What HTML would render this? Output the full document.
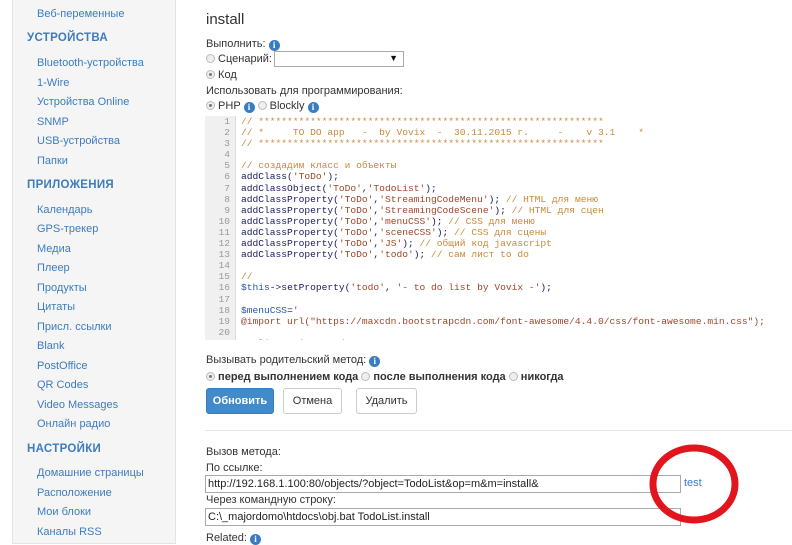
<!DOCTYPE html>
<html><head><meta charset="utf-8"><style>
*{margin:0;padding:0;box-sizing:border-box}
body{width:792px;height:542px;overflow:hidden;background:#fff;font-family:"Liberation Sans",Arial,sans-serif;font-size:11px;color:#333;position:relative}
.abs{position:absolute;white-space:nowrap}
#side{position:absolute;left:12px;top:-2px;width:164px;height:546px;background:#f5f5f5;border:1px solid #e3e3e3}
.l{position:absolute;left:37px;color:#3d7cc0;font-size:11px;white-space:nowrap}
.h{position:absolute;left:27px;color:#3d7cc0;font-size:11.5px;font-weight:bold;letter-spacing:.3px;white-space:nowrap}
.i{display:inline-block;width:11px;height:11px;border-radius:50%;background:#3a7cc0;color:#fff;font-size:9px;font-weight:bold;text-align:center;line-height:11px;vertical-align:-1px;font-family:"Liberation Serif",serif}
.r{display:inline-block;width:9px;height:9px;border-radius:50%;border:1px solid #bbb;background:#eee;vertical-align:-1px;position:relative}
.r.on:after{content:"";position:absolute;left:2px;top:2px;width:3px;height:3px;border-radius:50%;background:#777}
#code{position:absolute;left:205px;top:116px;width:580px;height:224px;overflow:hidden;font-family:"Liberation Mono",monospace;font-size:9.6px;line-height:11.1px}
#gut{position:absolute;left:0;top:0;width:31px;height:226px;background:#f0f0f0;border-right:1px solid #ddd;color:#999;text-align:right;padding-right:5px;padding-top:0}
#src{position:absolute;left:36px;top:0;color:#1a1a5e;white-space:pre}
.c{color:#c88a3a}.s{color:#a0462a}.v{color:#2a56b0}
.btn{position:absolute;top:388px;height:26px;border:1px solid #ccc;border-radius:3px;background:#fff;color:#333;font-size:11px;text-align:center;line-height:24px}
input{position:absolute;height:18px;border:1px solid #aaa;font-family:"Liberation Sans",sans-serif;font-size:11px;padding-left:2px;color:#222}
</style></head><body>
<div id="side"></div>
<div class="l" style="top:8px">Веб-переменные</div>
<div class="h" style="top:32px">УСТРОЙСТВА</div>
<div class="l" style="top:57px">Bluetooth-устройства</div>
<div class="l" style="top:77px">1-Wire</div>
<div class="l" style="top:96px">Устройства Online</div>
<div class="l" style="top:116px">SNMP</div>
<div class="l" style="top:135px">USB-устройства</div>
<div class="l" style="top:155px">Папки</div>
<div class="h" style="top:179px">ПРИЛОЖЕНИЯ</div>
<div class="l" style="top:204px">Календарь</div>
<div class="l" style="top:223px">GPS-трекер</div>
<div class="l" style="top:243px">Медиа</div>
<div class="l" style="top:262px">Плеер</div>
<div class="l" style="top:282px">Продукты</div>
<div class="l" style="top:301px">Цитаты</div>
<div class="l" style="top:321px">Присл. ссылки</div>
<div class="l" style="top:340px">Blank</div>
<div class="l" style="top:360px">PostOffice</div>
<div class="l" style="top:379px">QR Codes</div>
<div class="l" style="top:399px">Video Messages</div>
<div class="l" style="top:418px">Онлайн радио</div>
<div class="h" style="top:443px">НАСТРОЙКИ</div>
<div class="l" style="top:467px">Домашние страницы</div>
<div class="l" style="top:487px">Расположение</div>
<div class="l" style="top:506px">Мои блоки</div>
<div class="l" style="top:526px">Каналы RSS</div>

<div class="abs" style="left:206px;top:11px;font-size:15px;color:#333">install</div>
<div class="abs" style="left:206px;top:38px">Выполнить: <span class="i">i</span></div>
<div class="abs" style="left:206px;top:53px"><span class="r"></span> Сценарий:</div>
<div class="abs" style="left:274px;top:51px;width:130px;height:16px;border:1px solid #aaa;background:#fff"><span style="position:absolute;right:5px;top:1px;font-size:9px;color:#111">▼</span></div>
<div class="abs" style="left:206px;top:69px"><span class="r on"></span> Код</div>
<div class="abs" style="left:206px;top:85px">Использовать для программирования:</div>
<div class="abs" style="left:206px;top:100px"><span class="r on"></span> PHP <span class="i">i</span> <span class="r"></span> Blockly <span class="i">i</span></div>

<div id="code"><div id="gut">1<br>2<br>3<br>4<br>5<br>6<br>7<br>8<br>9<br>10<br>11<br>12<br>13<br>14<br>15<br>16<br>17<br>18<br>19<br>20<br>21</div>
<div id="src"><span class="c">// ************************************************************
// *     TO DO app   -  by Vovix  -  30.11.2015 г.     -    v 3.1    *
// ************************************************************</span>

<span class="c">// создадим класс и объекты</span>
addClass(<span class="s">'ToDo'</span>);
addClassObject(<span class="s">'ToDo'</span>,<span class="s">'TodoList'</span>);
addClassProperty(<span class="s">'ToDo'</span>,<span class="s">'StreamingCodeMenu'</span>); <span class="c">// HTML для меню</span>
addClassProperty(<span class="s">'ToDo'</span>,<span class="s">'StreamingCodeScene'</span>); <span class="c">// HTML для сцен</span>
addClassProperty(<span class="s">'ToDo'</span>,<span class="s">'menuCSS'</span>); <span class="c">// CSS для меню</span>
addClassProperty(<span class="s">'ToDo'</span>,<span class="s">'sceneCSS'</span>); <span class="c">// CSS для сцены</span>
addClassProperty(<span class="s">'ToDo'</span>,<span class="s">'JS'</span>); <span class="c">// общий код javascript</span>
addClassProperty(<span class="s">'ToDo'</span>,<span class="s">'todo'</span>); <span class="c">// сам лист to do</span>

<span class="c">//</span>
<span class="v">$this</span>->setProperty(<span class="s">'todo'</span>, <span class="s">'- to do list by Vovix -'</span>);

<span class="v">$menuCSS</span>=<span class="s">'</span>
<span class="s">@import url("https://maxcdn.bootstrapcdn.com/font-awesome/4.4.0/css/font-awesome.min.css");</span>

<span class="s">  .list  .item  .done   .....</span></div></div>

<div class="abs" style="left:206px;top:354px">Вызывать родительский метод: <span class="i">i</span></div>
<div class="abs" style="left:206px;top:371px;font-weight:bold;color:#333"><span class="r on"></span> перед выполнением кода <span class="r"></span> после выполнения кода <span class="r"></span> никогда</div>
<div class="btn" style="left:206px;width:68px;background:#428bca;border-color:#3a7cc0;color:#fff;font-weight:bold">Обновить</div>
<div class="btn" style="left:283px;width:59px">Отмена</div>
<div class="btn" style="left:356px;width:61px">Удалить</div>
<div class="abs" style="left:205px;top:430px;width:587px;height:1px;background:#e5e5e5"></div>
<div class="abs" style="left:206px;top:446px">Вызов метода:</div>
<div class="abs" style="left:206px;top:462px">По ссылке:</div>
<input style="left:205px;top:475px;width:476px" value="http://192.168.1.100:80/objects/?object=TodoList&amp;op=m&amp;m=install&amp;">
<div class="abs" style="left:684px;top:477px;color:#3d7cc0">test</div>
<div class="abs" style="left:206px;top:494px">Через командную строку:</div>
<input style="left:205px;top:508px;width:476px" value="C:\_majordomo\htdocs\obj.bat TodoList.install">
<div class="abs" style="left:206px;top:532px">Related: <span class="i">i</span></div>
<svg class="abs" style="left:640px;top:440px" width="110" height="90"><ellipse cx="54" cy="44" rx="41" ry="36" fill="none" stroke="#e2141d" stroke-width="7"/></svg>
</body></html>
